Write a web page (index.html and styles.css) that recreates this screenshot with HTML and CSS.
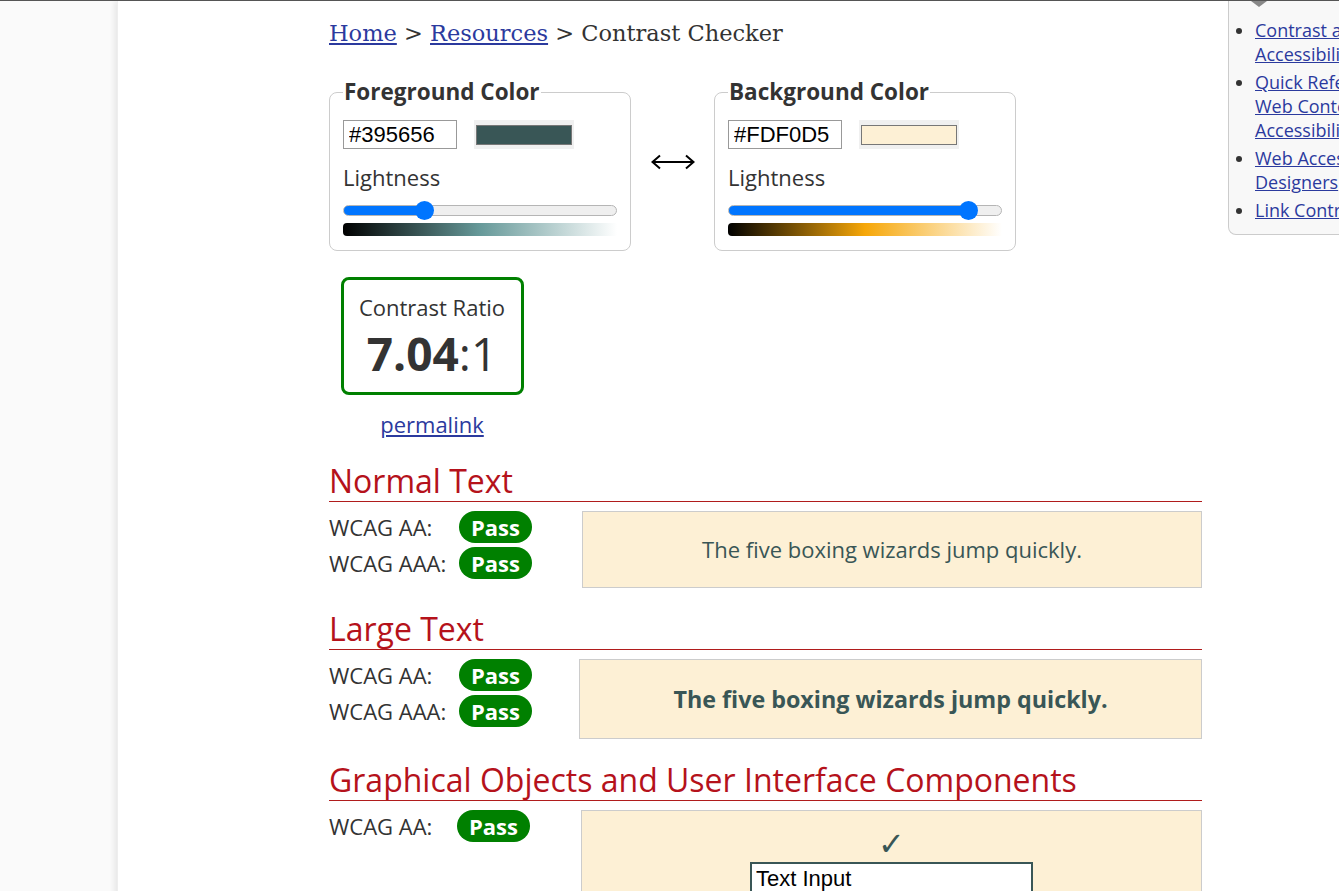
FILE: index.html
```html
<!DOCTYPE html>
<html lang="en">
<head>
<meta charset="utf-8">
<title>Contrast Checker</title>
<link rel="stylesheet" href="styles.css">
</head>
<body>
<div class="page">
  <main class="content">
    <nav class="breadcrumb"><a href="#">Home</a> &gt; <a href="#">Resources</a> &gt; Contrast Checker</nav>

    <div class="pickers">
      <fieldset class="picker">
        <legend>Foreground Color</legend>
        <div class="color-row">
          <input class="hex" type="text" value="#395656" aria-label="Foreground hex">
          <span class="swatch"><span class="swatch-inner fg"></span></span>
        </div>
        <div class="light-label">Lightness</div>
        <input class="slider" type="range" min="0" max="100" value="28" style="--val: 28%" aria-label="Foreground lightness">
        <div class="grad grad-fg"></div>
      </fieldset>

      <div class="swap" role="button" aria-label="Swap colors">
        <svg width="44" height="20" viewBox="0 0 44 20" aria-hidden="true">
          <path d="M1.5 10 H42.5 M9 3.5 L1.5 10 L9 16.5 M35 3.5 L42.5 10 L35 16.5" fill="none" stroke="#000" stroke-width="2" stroke-linejoin="miter"/>
        </svg>
      </div>

      <fieldset class="picker">
        <legend>Background Color</legend>
        <div class="color-row">
          <input class="hex" type="text" value="#FDF0D5" aria-label="Background hex">
          <span class="swatch"><span class="swatch-inner bg"></span></span>
        </div>
        <div class="light-label">Lightness</div>
        <input class="slider" type="range" min="0" max="100" value="91" style="--val: 91%" aria-label="Background lightness">
        <div class="grad grad-bg"></div>
      </fieldset>
    </div>

    <div class="ratio-wrap">
      <div class="ratio">
        <div class="ratio-label">Contrast Ratio</div>
        <div class="ratio-value"><b>7.04</b>:1</div>
      </div>
      <a class="permalink" href="#">permalink</a>
    </div>

    <section class="result result-first">
      <h2>Normal Text</h2>
      <div class="result-body">
        <div class="checks">
          <div class="check"><span class="lbl">WCAG AA:</span><span class="pass">Pass</span></div>
          <div class="check"><span class="lbl">WCAG AAA:</span><span class="pass">Pass</span></div>
        </div>
        <div class="sample sample-normal">The five boxing wizards jump quickly.</div>
      </div>
    </section>

    <section class="result">
      <h2>Large Text</h2>
      <div class="result-body">
        <div class="checks">
          <div class="check"><span class="lbl">WCAG AA:</span><span class="pass">Pass</span></div>
          <div class="check"><span class="lbl">WCAG AAA:</span><span class="pass">Pass</span></div>
        </div>
        <div class="sample sample-large">The five boxing wizards jump quickly.</div>
      </div>
    </section>

    <section class="result">
      <h2>Graphical Objects and User Interface Components</h2>
      <div class="result-body">
        <div class="checks">
          <div class="check"><span class="lbl">WCAG AA:</span><span class="pass pass-g">Pass</span></div>
        </div>
        <div class="sample sample-ui">
          <div class="tick">&#10003;</div>
          <input class="ui-input" type="text" value="Text Input" aria-label="Sample input">
        </div>
      </div>
    </section>
  </main>
</div>

<aside class="related">
  <span class="related-caret"></span>
  <ul>
    <li><a href="#">Contrast and Color<br>Accessibility</a></li>
    <li><a href="#">Quick Reference:<br>Web Content<br>Accessibility Guidelines</a></li>
    <li><a href="#">Web Accessibility for<br>Designers</a></li>
    <li><a href="#">Link Contrast Checker</a></li>
  </ul>
</aside>
</body>
</html>
```

FILE: styles.css
```css
html, body {
  margin: 0;
  padding: 0;
  overflow: hidden;
  height: 891px;
}
body {
  background: #fafafa;
  border-top: 1px solid #555;
  font-family: "Open Sans", "DejaVu Sans", sans-serif;
  color: #333;
  position: relative;
}
.page {
  margin-left: 117px;
  background: #fff;
  min-height: 900px;
  box-shadow: -3px 0 5px rgba(0, 0, 0, 0.07);
  border-left: 1px solid #eee;
}
.content {
  padding: 17px 0 0 211px;
  width: 873px;
}
a { color: #2b3a9e; }

.breadcrumb {
  font-family: "DejaVu Serif", "Liberation Serif", serif;
  font-size: 22.5px;
  line-height: 31px;
  color: #333;
}
.breadcrumb a { color: #2b3a9e; }

.pickers {
  display: flex;
  align-items: center;
  margin-top: 28px;
}
.picker {
  margin: 0;
  width: 301px;
  box-sizing: border-box;
  border: 1px solid #ccc;
  border-radius: 8px;
  padding: 0 13px 14px 13px;
}
.picker legend {
  font-weight: 700;
  font-size: 22.5px;
  line-height: 30px;
  padding: 0 1px;
  color: #333;
}
.color-row {
  display: flex;
  align-items: center;
  gap: 17px;
  margin-top: 13px;
}
.hex {
  width: 114px;
  height: 29px;
  box-sizing: border-box;
  border: 1px solid #999;
  padding: 0 5px;
  font-family: "Liberation Sans", Arial, sans-serif;
  font-size: 22px;
  color: #000;
  margin: 0;
}
.swatch {
  display: flex;
  width: 100px;
  height: 29px;
  box-sizing: border-box;
  padding: 5px 2px 4px;
  background: #f0f0f0;
}
.swatch-inner {
  flex: 1;
  border: 1px solid #777;
}
.swatch-inner.fg { background: #395656; }
.swatch-inner.bg { background: #fdf0d5; }

.light-label {
  font-size: 22px;
  line-height: 30px;
  margin-top: 13px;
}
.slider {
  -webkit-appearance: none;
  appearance: none;
  display: block;
  width: 274px;
  height: 11px;
  margin: 13px 0 0 0;
  border-radius: 6px;
  border: 1px solid #b5b5b5;
  box-sizing: border-box;
  background: linear-gradient(to right, #0075ff 0 var(--val), #efefef var(--val) 100%);
}
.slider::-webkit-slider-thumb {
  -webkit-appearance: none;
  width: 19px;
  height: 19px;
  border-radius: 50%;
  background: #0075ff;
  border: none;
}
.grad {
  width: 274px;
  height: 13px;
  margin-top: 7px;
  border-radius: 4px 0 0 4px;
}
.grad-fg { background: linear-gradient(to right, #000, hsl(180, 20%, 50%), #fff); }
.grad-bg { background: linear-gradient(to right, #000, hsl(40, 93%, 50%), #fff); }

.swap {
  width: 83px;
  display: flex;
  justify-content: center;
  margin-top: -5px;
}
.swap svg { display: block; }

.ratio-wrap {
  width: 206px;
  display: flex;
  flex-direction: column;
  align-items: center;
  margin-top: 26px;
}
.ratio {
  width: 183px;
  height: 118px;
  box-sizing: border-box;
  border: 3px solid #008000;
  border-radius: 8px;
  text-align: center;
  padding-top: 12px;
}
.ratio-label {
  font-size: 22px;
  line-height: 30px;
}
.ratio-value {
  font-size: 46px;
  line-height: 56px;
  margin-top: 3px;
}
.ratio-value b { font-weight: 700; }
.permalink {
  font-size: 22px;
  line-height: 30px;
  margin-top: 14px;
}

.result { margin-top: 22px; }
.result-first { margin-top: 23px; }
h2 {
  margin: 0;
  font-weight: 400;
  font-size: 32px;
  line-height: 38px;
  color: #b5121b;
  border-bottom: 1px solid #b01c1c;
  padding-bottom: 1px;
}
.result-body {
  display: flex;
  align-items: flex-start;
  margin-top: 9px;
}
.checks {
  width: 250px;
  flex: none;
  margin-top: -2px;
}
.check {
  display: flex;
  align-items: center;
  height: 36px;
}
.lbl {
  width: 130px;
  font-size: 22px;
}
.pass {
  display: inline-block;
  background: #008000;
  color: #fff;
  font-weight: 700;
  font-size: 22px;
  line-height: 32px;
  padding: 0 12px;
  border-radius: 16px;
}
.pass-g { margin-left: -2px; }
.sample {
  flex: 1;
  background: #fdf0d5;
  border: 1px solid #ccc;
  color: #395656;
  font-size: 22px;
  text-align: center;
  box-sizing: border-box;
}
.sample-normal {
  margin-left: 3px;
  height: 77px;
  line-height: 75px;
}
.sample-large {
  height: 80px;
  line-height: 78px;
  font-weight: 700;
  font-size: 23.3px;
}
.sample-ui {
  margin-left: 2px;
  height: 120px;
  display: flex;
  flex-direction: column;
  align-items: center;
  padding-top: 16px;
}
.tick {
  font-family: "DejaVu Sans", sans-serif;
  font-weight: 700;
  font-size: 32px;
  line-height: 34px;
  color: #395656;
}
.ui-input {
  margin-top: 1px;
  width: 283px;
  height: 34px;
  box-sizing: border-box;
  border: 2px solid #395656;
  background: #fff;
  font-family: "Liberation Sans", Arial, sans-serif;
  font-size: 22px;
  padding: 0 4px;
  color: #000;
}

.related {
  position: absolute;
  top: 0;
  left: 1228px;
  width: 300px;
  height: 234px;
  box-sizing: border-box;
  background: #f8f8f8;
  border: 1px solid #ccc;
  border-top: none;
  border-radius: 0 0 0 8px;
}
.related-caret {
  position: absolute;
  top: 0;
  left: 22px;
  width: 0;
  height: 0;
  border-left: 8px solid transparent;
  border-right: 8px solid transparent;
  border-top: 6px solid #888;
}
.related ul {
  margin: 0;
  padding: 17px 0 0 26px;
  font-size: 18px;
  line-height: 24px;
  white-space: nowrap;
}
.related li { margin-bottom: 4px; }
.related a { color: #2b3a9e; }
```
